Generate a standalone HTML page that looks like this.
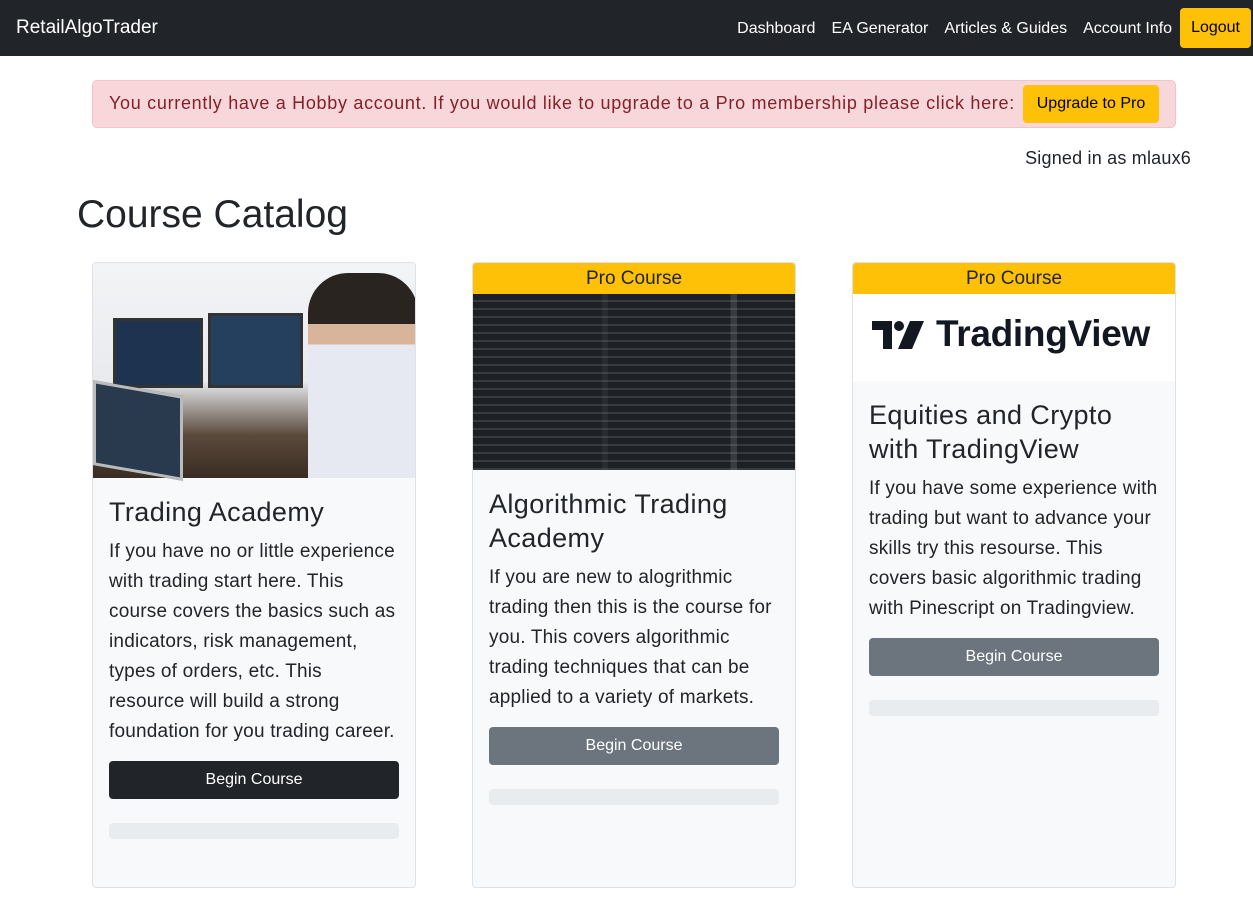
<!DOCTYPE html>
<html><head><style>
*{box-sizing:border-box;margin:0;padding:0}
body{width:1253px;height:910px;background:#fff;font-family:"Liberation Sans",sans-serif;color:#212529;overflow:hidden;position:relative}
.nav{height:56px;background:#212529;position:relative}
.brand{position:absolute;left:16px;top:17px;color:#fff;font-size:19px}
.links{position:absolute;right:0;top:8px;display:flex;align-items:center;color:#fff;font-size:16px}
.links span{margin-right:16px;position:relative;top:1px}
.logout{background:#ffc107;color:#000;padding:0 11px;height:40px;line-height:40px;border-radius:4px;margin-right:2px}
.alert{position:absolute;left:92px;top:80px;width:1084px;height:48px;background:#f8d7da;border:1px solid #f5c2c7;border-radius:5px;color:#842029;font-size:18px;letter-spacing:0.7px;padding-left:16px;line-height:44px}
.up{position:absolute;left:930px;top:4px;height:38px;width:136px;background:#ffc107;color:#000;font-size:16px;letter-spacing:0;text-align:center;line-height:38px;border-radius:4px}
.signed{position:absolute;right:62px;top:148px;font-size:18px;letter-spacing:0.2px}
h1{position:absolute;left:77px;top:193px;font-size:39px;font-weight:500}
.card{position:absolute;top:262px;width:324px;height:626px;background:#f8f9fa;border:1px solid #dee2e6;border-radius:4px;overflow:hidden}
.pro{height:31px;background:#ffc107;text-align:center;font-size:19px;line-height:31px}
.body{padding:16px 16px}
.t{font-size:27px;line-height:34px;font-weight:500;margin-bottom:8px;letter-spacing:0.4px}
.p{font-size:19px;line-height:30px;letter-spacing:0.2px}
.btn{height:38px;border-radius:4px;color:#fff;text-align:center;line-height:38px;font-size:16px;margin-top:14px}
.prog{height:16px;background:#e9ecef;border-radius:4px;margin-top:24px}
</style></head><body>
<div class="nav"><div class="brand">RetailAlgoTrader</div>
<div class="links"><span>Dashboard</span><span>EA Generator</span><span>Articles &amp; Guides</span><span style="margin-right:8px">Account Info</span><div class="logout">Logout</div></div></div>
<div class="alert">You currently have a Hobby account. If you would like to upgrade to a Pro membership please click here:<div class="up">Upgrade to Pro</div></div>
<div class="signed">Signed in as mlaux6</div>
<h1>Course Catalog</h1>

<div class="card" style="left:92px">
<div style="height:215px;position:relative;background:linear-gradient(180deg,#f3f4f6 0%,#e8eaee 55%,#5a4a3c 80%,#3a2c22 100%)">
<div style="position:absolute;left:20px;top:55px;width:90px;height:70px;background:#1d3350;border:3px solid #333"></div>
<div style="position:absolute;left:115px;top:50px;width:95px;height:75px;background:#24405e;border:3px solid #333"></div>
<div style="position:absolute;left:0;top:125px;width:90px;height:85px;background:#2a3a4e;border:3px solid #bbb;transform:skewY(10deg)"></div>
<div style="position:absolute;left:215px;top:10px;width:110px;height:205px;background:linear-gradient(180deg,#2a2420 0 25%,#d8b59a 25% 35%,#e6e9f2 35%);border-radius:40px 40px 0 0"></div>
</div>
<div class="body"><div class="t" style="margin-top:1px">Trading Academy</div>
<div class="p">If you have no or little experience with trading start here. This course covers the basics such as indicators, risk management, types of orders, etc. This resource will build a strong foundation for you trading career.</div>
<div class="btn" style="background:#212529">Begin Course</div><div class="prog"></div></div></div>

<div class="card" style="left:472px">
<div class="pro">Pro Course</div>
<div style="height:176px;background:#1f2023;background-image:repeating-linear-gradient(180deg,transparent 0 6px,rgba(120,140,160,.25) 6px 8px),linear-gradient(90deg,#1f2023 0 40%,#2a2b2e 40% 42%,#1f2023 42% 80%,#3a3b3e 80% 82%,#1f2023 82%)"></div>
<div class="body" style="padding-top:17px"><div class="t">Algorithmic Trading Academy</div>
<div class="p">If you are new to alogrithmic trading then this is the course for you. This covers algorithmic trading techniques that can be applied to a variety of markets.</div>
<div class="btn" style="background:#6c757d">Begin Course</div><div class="prog"></div></div></div>

<div class="card" style="left:852px">
<div class="pro">Pro Course</div>
<div style="height:87px;background:#fff;position:relative">
<svg style="position:absolute;left:19px;top:27px" width="52" height="28" viewBox="0 0 52 28"><path d="M0 0H20V28H11V9H0Z" fill="#131722"/><circle cx="27" cy="5" r="5" fill="#131722"/><path d="M38 0H52L40 28H26Z" fill="#131722"/></svg>
<div style="position:absolute;left:83px;top:19px;font-size:37px;font-weight:700;color:#131722;letter-spacing:-0.3px">TradingView</div></div>
<div class="body" style="padding-top:17px"><div class="t">Equities and Crypto with TradingView</div>
<div class="p">If you have some experience with trading but want to advance your skills try this resourse. This covers basic algorithmic trading with Pinescript on Tradingview.</div>
<div class="btn" style="background:#6c757d">Begin Course</div><div class="prog"></div></div></div>
</body></html>
